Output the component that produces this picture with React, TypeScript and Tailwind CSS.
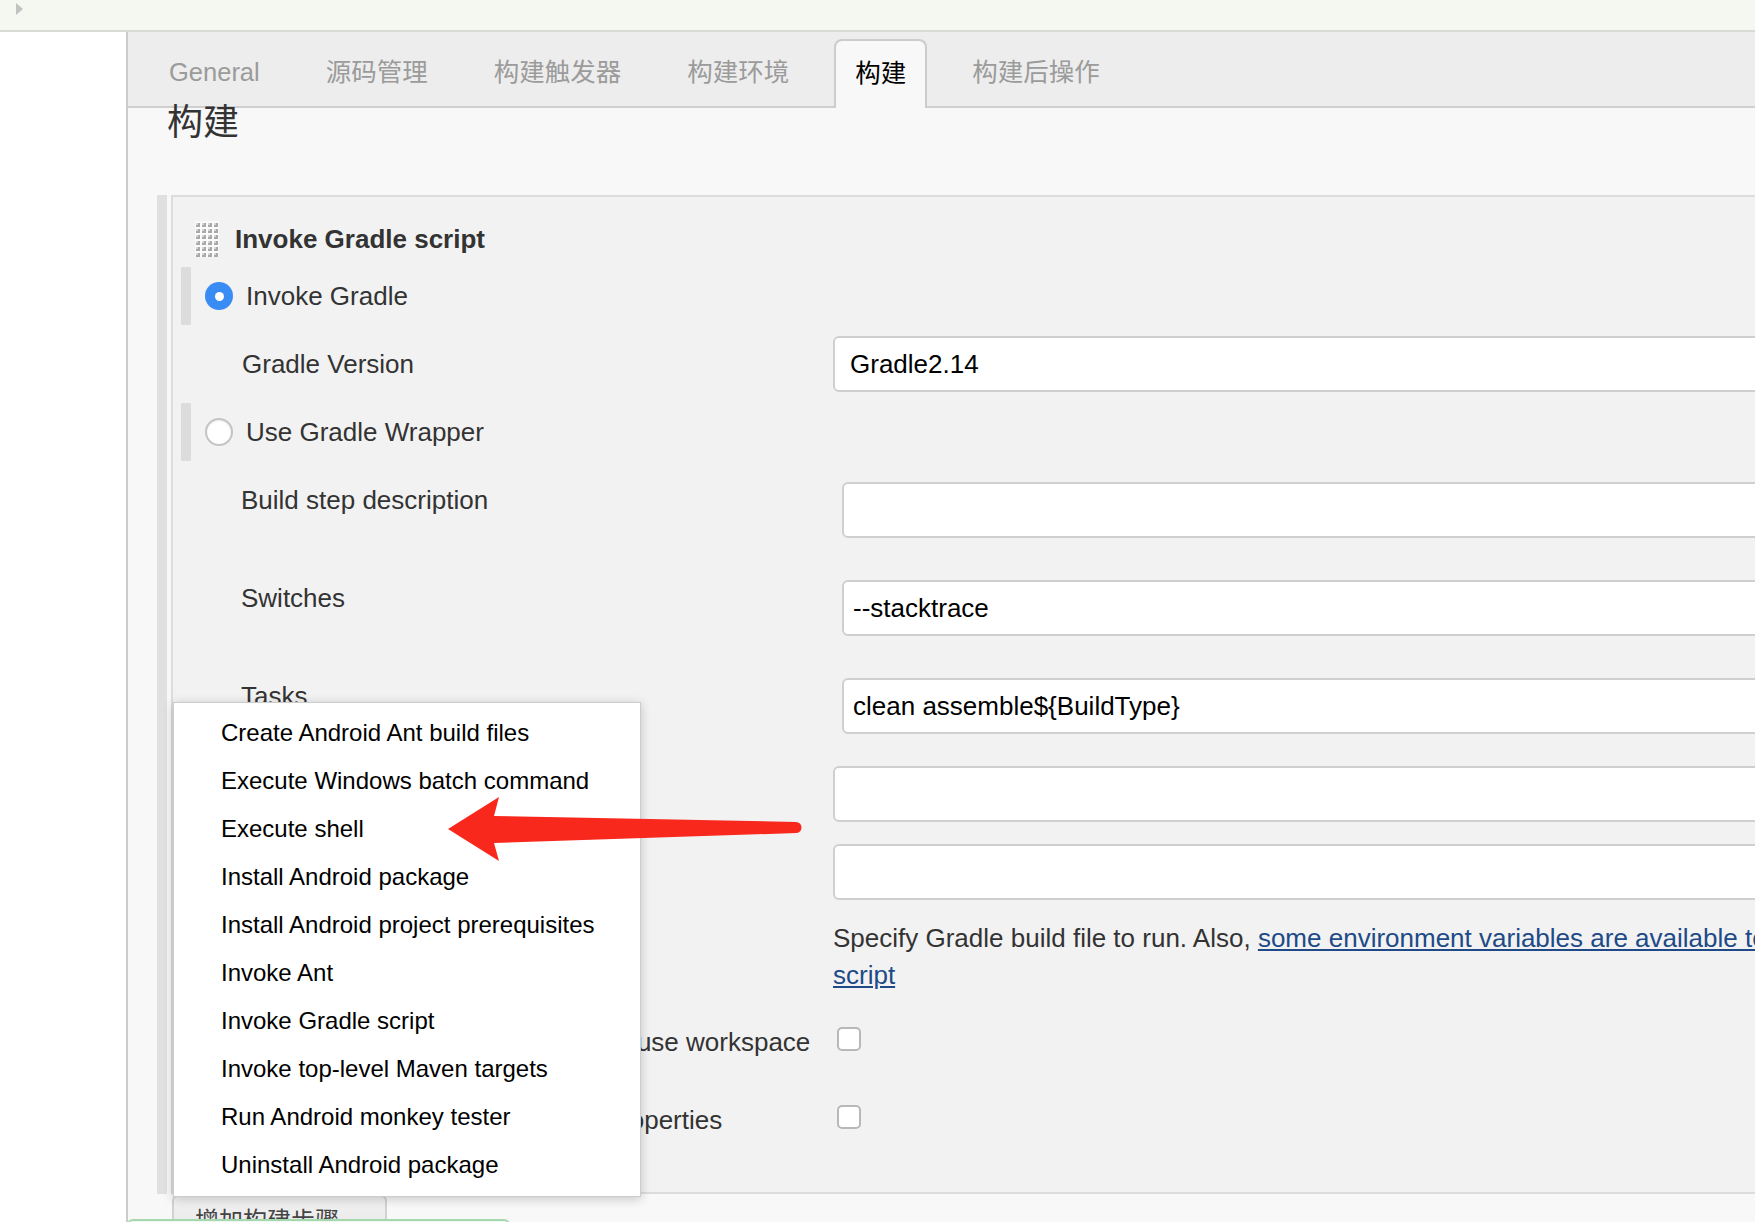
import React from 'react';

const tabs = ['General', '源码管理', '构建触发器', '构建环境', '构建', '构建后操作'];

const menuItems = [
  'Create Android Ant build files',
  'Execute Windows batch command',
  'Execute shell',
  'Install Android package',
  'Install Android project prerequisites',
  'Invoke Ant',
  'Invoke Gradle script',
  'Invoke top-level Maven targets',
  'Run Android monkey tester',
  'Uninstall Android package',
];

const DragHandle = () => (
  <svg width="24" height="36" viewBox="0 0 24 36" className="shrink-0">
    <rect width="24" height="36" fill="#fafafa" />
    {[0, 1, 2, 3, 4, 5].map((r) =>
      [0, 1, 2, 3].map((c) => (
        <g key={`${r}-${c}`}>
          <rect x={1 + c * 6} y={2 + r * 6} width="4" height="4" fill="#a9a9a9" />
          <rect x={1 + c * 6} y={2 + r * 6} width="2" height="2" fill="#d6d6d6" />
        </g>
      ))
    )}
  </svg>
);

const RadioRow = ({ label, checked }: { label: string; checked: boolean }) => (
  <div className="ml-[8px] flex h-[58px] items-center">
    <div className="h-full w-[10px] bg-[#dcdcdc]" />
    {checked ? (
      <div className="ml-[14px] flex h-[28px] w-[28px] items-center justify-center rounded-full bg-[#3a8cf5]">
        <div className="h-[9px] w-[9px] rounded-full bg-white" />
      </div>
    ) : (
      <div className="ml-[14px] h-[28px] w-[28px] rounded-full border-2 border-[#c4c4c4] bg-white shadow-[inset_0_1px_2px_rgba(0,0,0,0.08)]" />
    )}
    <span className="ml-[13px] text-[26px] leading-[30px] text-[#333]">{label}</span>
  </div>
);

const Checkbox = () => (
  <div className="h-[24px] w-[24px] shrink-0 rounded-[5px] border-2 border-[#b8b8b8] bg-white" />
);

export default function App() {
  return (
    <div className="relative h-[1222px] w-[1755px] overflow-hidden bg-white font-['Liberation_Sans','Noto_Sans_CJK_SC',sans-serif] text-[#333]">
      {/* top breadcrumb strip */}
      <div className="h-[32px] border-b-2 border-[#d8dbd3] bg-[#f5f8f0] pl-[16px] pt-[3px]">
        <svg width="8" height="12" viewBox="0 0 8 12">
          <polygon points="0,0 7,6 0,12" fill="#c2c2c2" />
        </svg>
      </div>

      <div className="flex h-[1190px]">
        <div className="w-[126px] shrink-0 bg-white" />
        <div className="flex-1 border-l-2 border-[#cccccc] bg-[#f8f8f8]">
          {/* tab bar */}
          <div className="flex h-[76px] items-end gap-[24px] border-b-2 border-[#cfcfcf] bg-[#ededed] pl-[20px]">
            {tabs.map((t, i) =>
              i === 4 ? (
                <div
                  key={t}
                  className="-mb-[2px] flex h-[69px] items-center rounded-t-[8px] border-x-2 border-t-2 border-[#cccccc] bg-[#f8f8f8] px-[19px] pb-[3px] text-[25.5px] text-black"
                >
                  {t}
                </div>
              ) : (
                <div
                  key={t}
                  className="-mb-[2px] flex h-[69px] items-center px-[21px] pb-[3px] text-[25.5px] text-[#9b9b9b]"
                >
                  {t}
                </div>
              )
            )}
          </div>

          <h1 className="pl-[39px] text-[36px] leading-[30px] font-normal text-[#333]">构建</h1>

          {/* build step panel */}
          <div className="mt-[57px] flex">
            <div className="ml-[29px] w-[10px] shrink-0 bg-[#e0e0e0]" />
            <div className="ml-[4px] flex-1 border-y-2 border-l-2 border-[#dcdcdc] bg-[#f2f2f2] pb-[57px]">
              <div className="flex items-center gap-[16px] pl-[22px] pt-[24px]">
                <DragHandle />
                <span className="text-[26px] leading-[30px] font-bold text-[#333]">Invoke Gradle script</span>
              </div>

              <div className="mt-[10px]">
                <RadioRow label="Invoke Gradle" checked />
              </div>

              <div className="mt-[11px] flex h-[56px] items-center">
                <div className="w-[660px] shrink-0 pl-[69px] text-[26px] leading-[30px]">Gradle Version</div>
                <div className="flex h-[56px] w-[960px] shrink-0 items-center rounded-[6px] border-2 border-[#cfcfcf] bg-white pl-[15px] text-[26px] text-black">
                  Gradle2.14
                </div>
              </div>

              <div className="mt-[11px]">
                <RadioRow label="Use Gradle Wrapper" checked={false} />
              </div>

              <div className="mt-[21px] flex items-start">
                <div className="w-[669px] shrink-0 pl-[68px] pt-[3px] text-[26px] leading-[30px]">Build step description</div>
                <div className="h-[56px] w-[960px] shrink-0 rounded-[6px] border-2 border-[#cfcfcf] bg-white" />
              </div>

              <div className="mt-[42px] flex items-start">
                <div className="w-[669px] shrink-0 pl-[68px] pt-[3px] text-[26px] leading-[30px]">Switches</div>
                <div className="flex h-[56px] w-[960px] shrink-0 items-center rounded-[6px] border-2 border-[#cfcfcf] bg-white pl-[9px] text-[26px] text-black">
                  --stacktrace
                </div>
              </div>

              <div className="mt-[42px] flex items-start">
                <div className="w-[669px] shrink-0 pl-[68px] pt-[3px] text-[26px] leading-[30px]">Tasks</div>
                <div className="flex h-[56px] w-[960px] shrink-0 items-center rounded-[6px] border-2 border-[#cfcfcf] bg-white pl-[9px] text-[26px] text-black">
                  {'clean assemble${BuildType}'}
                </div>
              </div>

              <div className="mt-[32px] flex items-start">
                <div className="w-[660px] shrink-0 pl-[68px] pt-[3px] text-[26px] leading-[30px]">Root Build script</div>
                <div className="h-[56px] w-[960px] shrink-0 rounded-[6px] border-2 border-[#cfcfcf] bg-white" />
              </div>

              <div className="mt-[22px] flex items-start">
                <div className="w-[660px] shrink-0 pl-[68px] pt-[3px] text-[26px] leading-[30px]">Build File</div>
                <div className="h-[56px] w-[960px] shrink-0 rounded-[6px] border-2 border-[#cfcfcf] bg-white" />
              </div>

              <div className="ml-[660px] mt-[20px] w-[1080px] text-[26px] leading-[37px] text-[#333]">
                Specify Gradle build file to run. Also,{' '}
                <a href="#" className="text-[#204a87] underline">
                  some environment variables are available to the build script
                </a>
              </div>

              <div className="mt-[33px] flex items-start">
                <div className="w-[664px] shrink-0 pl-[68px] text-[26px] leading-[30px]">Force GRADLE_USER_HOME to use workspace</div>
                <Checkbox />
              </div>

              <div className="mt-[48px] flex items-start">
                <div className="w-[664px] shrink-0 pl-[68px] text-[26px] leading-[30px]">Pass job parameters as Gradle properties</div>
                <Checkbox />
              </div>
            </div>
          </div>

          <div className="ml-[44px] mt-[1px] flex h-[52px] w-[215px] items-center rounded-[6px] border-2 border-[#d2d2d2] bg-gradient-to-b from-[#f2f2f2] to-[#e4e4e4] pl-[21px] text-[24px] text-[#444]">
            增加构建步骤
          </div>
        </div>
      </div>

      {/* step type dropdown */}
      <div className="absolute left-[173px] top-[702px] w-[468px] border border-[#cccccc] bg-white pb-[7px] pt-[6px] shadow-[0_2px_10px_rgba(0,0,0,0.2)]">
        {menuItems.map((m) => (
          <div key={m} className="h-[48px] pl-[47px] text-[24px] leading-[48px] text-black">
            {m}
          </div>
        ))}
      </div>

      {/* annotation arrow */}
      <svg className="absolute left-[440px] top-[790px]" width="370" height="80" viewBox="0 0 370 80">
        <path d="M8,39 L59,7 L54,26 L356,32 A5.5,5.5 0 0 1 356,43 L54,53 L59,71 Z" fill="#f8281c" />
      </svg>

      {/* sticky save bar peeking at the bottom */}
      <div className="absolute left-[127px] top-[1219px] h-[40px] w-[383px] rounded-[6px] border-2 border-[#a6d8b0] bg-[#eef8f0]" />
    </div>
  );
}
